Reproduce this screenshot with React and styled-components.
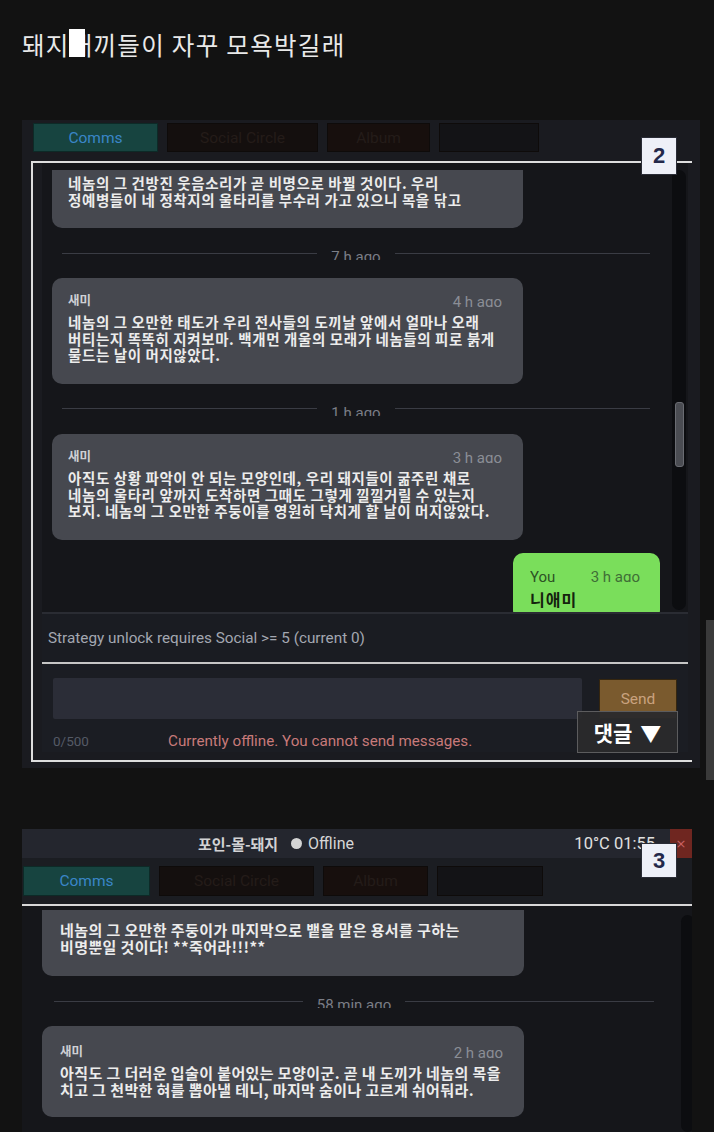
import React from 'react';
import styled, { createGlobalStyle } from 'styled-components';

const GlobalStyle = createGlobalStyle`
  html, body {
    margin: 0;
    background: #121212;
  }
  body {
    font-family: "Noto Sans CJK KR", "Noto Sans", sans-serif;
  }
`;

const Page = styled.div`
  position: relative;
  width: 714px;
  height: 1132px;
  overflow: hidden;
  background: #121212;
`;

const Title = styled.h1`
  box-sizing: border-box;
  height: 120px;
  margin: 0;
  padding: 29px 22px 0;
  font-size: 24.5px;
  font-weight: 400;
  letter-spacing: 1.3px;
  line-height: 32px;
  color: #e9e9e9;
  white-space: nowrap;
`;

const Censor = styled.span`
  position: relative;
  &::after {
    content: '';
    position: absolute;
    left: -1px;
    top: 2px;
    width: 16px;
    height: 28px;
    background: #ffffff;
  }
`;

const Shot = styled.section`
  position: relative;
  margin-left: 22px;
  margin-top: ${(p) => p.$mt || 0}px;
  width: ${(p) => p.$w}px;
  height: ${(p) => p.$h}px;
  background: #1a1b20;
`;

const TabRow = styled.div`
  display: flex;
  gap: 9px;
  height: ${(p) => p.$h}px;
  padding: ${(p) => p.$pad};
  box-sizing: border-box;
  background: ${(p) => p.$bg || 'transparent'};
`;

const Tab = styled.div`
  display: flex;
  align-items: center;
  justify-content: center;
  width: ${(p) => p.$w}px;
  height: ${(p) => p.$h}px;
  box-sizing: border-box;
  font-family: Roboto, "Noto Sans", sans-serif;
  font-size: 15.5px;
  color: ${(p) => (p.$active ? '#3a86c8' : '#241c19')};
  background: ${(p) => (p.$active ? '#174440' : p.$bg || '#140f0e')};
  border: 1px solid ${(p) => (p.$active ? '#0d2a27' : '#0e0b0a')};
`;

const Badge = styled.div`
  position: absolute;
  left: 619px;
  top: ${(p) => p.$top}px;
  z-index: 3;
  width: 36px;
  height: ${(p) => p.$h}px;
  display: flex;
  align-items: center;
  justify-content: center;
  box-sizing: border-box;
  background: #eef0f8;
  border: 1px solid #2a2c36;
  font-family: "Liberation Sans", Arial, sans-serif;
  font-weight: 700;
  font-size: 22px;
  color: #23284a;
`;

const Frame = styled.div`
  margin-left: 9px;
  width: 661px;
  box-sizing: border-box;
  border-top: 2px solid #dedede;
  border-left: 2px solid #dedede;
  border-bottom: 2px solid #dedede;
  padding: 0 4px 8px 9px;
`;

const ChatArea = styled.div`
  display: flex;
  height: ${(p) => p.$h}px;
  overflow: hidden;
  background: #15161a;
`;

const Messages = styled.div`
  display: flex;
  flex-direction: column;
  gap: 18px;
  width: ${(p) => p.$w}px;
  padding: ${(p) => p.$pad};
  flex-shrink: 0;
`;

const Bubble = styled.div`
  width: ${(p) => p.$w}px;
  box-sizing: border-box;
  flex-shrink: 0;
  padding: ${(p) => p.$pad};
  background: #46484f;
  border-radius: ${(p) => (p.$cut ? '0 0 10px 10px' : '10px')};
  color: #ececec;
`;

const Meta = styled.div`
  display: flex;
  justify-content: space-between;
  align-items: flex-start;
  height: 14px;
  overflow: hidden;
  margin-bottom: ${(p) => p.$mb}px;
`;

const Name = styled.span`
  font-size: 12.5px;
  font-weight: 700;
  line-height: 14px;
  color: #cfd0d5;
`;

const Time = styled.span`
  font-family: Roboto, "Noto Sans", sans-serif;
  font-size: 15px;
  line-height: 19px;
  color: ${(p) => p.$color || '#8b8e96'};
`;

const Line = styled.div`
  font-size: ${(p) => p.$fs}px;
  font-weight: 700;
  letter-spacing: ${(p) => p.$ls}px;
  line-height: ${(p) => p.$lh}px;
  white-space: nowrap;
`;

const Sep = styled.div`
  display: flex;
  align-items: center;
  gap: 14px;
  height: 14px;
  margin: 0 ${(p) => p.$mx}px;
  flex-shrink: 0;
  overflow: hidden;
`;

const SepRule = styled.div`
  flex: 1;
  height: 1px;
  background: #3a3c44;
`;

const SepLabel = styled.span`
  align-self: flex-start;
  font-family: Roboto, "Noto Sans", sans-serif;
  font-size: 15px;
  line-height: 22px;
  color: #7b7e87;
`;

const Mine = styled.div`
  align-self: flex-end;
  width: 147px;
  box-sizing: border-box;
  flex-shrink: 0;
  margin-top: -5px;
  padding: 15px 20px 12px 17px;
  background: #7ade5b;
  border-radius: 10px;
`;

const MineText = styled.div`
  font-size: 16px;
  font-weight: 700;
  letter-spacing: 1px;
  line-height: 18px;
  color: #15230e;
`;

const Track = styled.div`
  display: flex;
  flex-direction: column;
  align-items: center;
  width: ${(p) => p.$w}px;
  margin: ${(p) => p.$m};
  padding-top: ${(p) => p.$thumbAt || 0}px;
  box-sizing: border-box;
  background: #0c0d10;
  border-radius: 7px;
  flex-shrink: 0;
`;

const Thumb = styled.div`
  width: 7px;
  height: 63px;
  border-radius: 3px;
  background: #4a4c52;
  border: 1px solid #6a6c72;
`;

const Rule = styled.div`
  height: ${(p) => p.$h}px;
  background: ${(p) => p.$c};
`;

const Notice = styled.div`
  height: 48px;
  padding-left: 6px;
  background: #1a1c22;
  font-family: Roboto, "Noto Sans", sans-serif;
  font-size: 15.3px;
  line-height: 48px;
  color: #a3a7b1;
`;

const Composer = styled.div`
  padding: 14px 11px 2px;
  background: #1b1d23;
`;

const InputRow = styled.div`
  display: flex;
  gap: 17px;
  align-items: flex-start;
`;

const Input = styled.div`
  width: 529px;
  height: 41px;
  background: #2b2d37;
  border-radius: 2px;
`;

const SendBtn = styled.div`
  display: flex;
  align-items: center;
  justify-content: center;
  width: 78px;
  height: 40px;
  margin-top: 1px;
  box-sizing: border-box;
  background: #7a5a2e;
  border: 1px solid #35260f;
  font-family: Roboto, "Noto Sans", sans-serif;
  font-size: 15.5px;
  color: #c9a27e;
`;

const Footer = styled.div`
  display: flex;
  align-items: baseline;
  margin-top: 13px;
  font-family: Roboto, "Noto Sans", sans-serif;
  line-height: 18px;
`;

const Counter = styled.span`
  width: 115px;
  font-size: 13.5px;
  color: #555a66;
`;

const Offline = styled.span`
  font-size: 15.2px;
  color: #c87a7a;
`;

const CommentTag = styled.div`
  position: absolute;
  left: 555px;
  top: 591px;
  z-index: 4;
  width: 101px;
  height: 42px;
  box-sizing: border-box;
  display: flex;
  align-items: center;
  justify-content: center;
  gap: 8px;
  background: rgba(42, 42, 44, 0.95);
  border: 1px solid #5c5c5e;
  font-size: 21px;
  font-weight: 700;
  color: #ffffff;
`;

const TopBar = styled.div`
  display: flex;
  align-items: center;
  height: 29px;
  padding-left: 176px;
  background: #24262e;
`;

const Location = styled.span`
  font-size: 15px;
  font-weight: 700;
  color: #d2d2d4;
`;

const Status = styled.span`
  display: flex;
  align-items: center;
  gap: 6px;
  margin-left: 13px;
  font-family: Roboto, "Noto Sans", sans-serif;
  font-size: 16px;
  color: #d6d6d6;
`;

const Dot = styled.span`
  width: 11px;
  height: 11px;
  border-radius: 50%;
  background: #d4d4d4;
`;

const Clock = styled.span`
  margin-left: auto;
  margin-right: 15px;
  font-family: Roboto, "Noto Sans", sans-serif;
  font-size: 16.5px;
  color: #e0e0e0;
`;

const Close = styled.div`
  display: flex;
  align-items: center;
  justify-content: center;
  width: 22px;
  height: 29px;
  background: #6f2620;
  font-family: "DejaVu Sans", sans-serif;
  font-size: 13px;
  color: #c86060;
`;

const PageScroll = styled.div`
  position: absolute;
  right: 0;
  top: 620px;
  width: 8px;
  height: 160px;
  background: #3a3a3a;
`;

const shotOne = [
  { cut: true, lines: ['네놈의 그 건방진 웃음소리가 곧 비명으로 바뀔 것이다. 우리', '정예병들이 네 정착지의 울타리를 부수러 가고 있으니 목을 닦고'] },
  { sep: '7 h ago' },
  { name: '새미', time: '4 h ago', lines: ['네놈의 그 오만한 태도가 우리 전사들의 도끼날 앞에서 얼마나 오래', '버티는지 똑똑히 지켜보마. 백개먼 개울의 모래가 네놈들의 피로 붉게', '물드는 날이 머지않았다.'] },
  { sep: '1 h ago' },
  { name: '새미', time: '3 h ago', lines: ['아직도 상황 파악이 안 되는 모양인데, 우리 돼지들이 굶주린 채로', '네놈의 울타리 앞까지 도착하면 그때도 그렇게 낄낄거릴 수 있는지', '보지. 네놈의 그 오만한 주둥이를 영원히 닥치게 할 날이 머지않았다.'] },
];

const shotTwo = [
  { cut: true, lines: ['네놈의 그 오만한 주둥이가 마지막으로 뱉을 말은 용서를 구하는', '비명뿐일 것이다! **죽어라!!!**'] },
  { sep: '58 min ago' },
  { name: '새미', time: '2 h ago', lines: ['아직도 그 더러운 입술이 붙어있는 모양이군. 곧 내 도끼가 네놈의 목을', '치고 그 천박한 혀를 뽑아낼 테니, 마지막 숨이나 고르게 쉬어둬라.'] },
];

function Feed({ items, v }) {
  return items.map((m, i) => {
    if (m.sep) {
      return (
        <Sep key={i} $mx={v.sepMx}>
          <SepRule />
          <SepLabel>{m.sep}</SepLabel>
          <SepRule />
        </Sep>
      );
    }
    return (
      <Bubble key={i} $w={v.w} $cut={m.cut} $pad={m.cut ? v.cutPad : v.pad}>
        {m.name && (
          <Meta $mb={v.metaMb}>
            <Name>{m.name}</Name>
            <Time>{m.time}</Time>
          </Meta>
        )}
        {m.lines.map((l, j) => (
          <Line key={j} $fs={v.fs} $ls={v.ls} $lh={v.lh}>{l}</Line>
        ))}
      </Bubble>
    );
  });
}

const v1 = { w: 471, pad: '15px 21px 20px 16px', cutPad: '5px 21px 20px 16px', metaMb: 7, fs: 14.5, ls: 0.6, lh: 16.6, sepMx: 10 };
const v2 = { w: 482, pad: '18px 21px 19px 18px', cutPad: '11px 21px 21px 18px', metaMb: 6, fs: 15, ls: 0.4, lh: 17, sepMx: 12 };

export default function App() {
  return (
    <Page>
      <GlobalStyle />
      <Title>
        돼지<Censor>새</Censor>끼들이 자꾸 모욕박길래
      </Title>

      <Shot $w={678} $h={648}>
        <TabRow $h={41} $pad="3px 0 9px 11px">
          <Tab $active $w={125} $h={29}>Comms</Tab>
          <Tab $w={151} $h={29}>Social Circle</Tab>
          <Tab $w={103} $h={29} $bg="#170f0d">Album</Tab>
          <Tab $w={100} $h={29} $bg="#131316" />
        </TabRow>
        <Badge $top={17} $h={38}>2</Badge>
        <Frame>
          <ChatArea $h={449}>
            <Messages $w={608} $pad="7px 0 0 10px">
              <Feed items={shotOne} v={v1} />
              <Mine>
                <Meta $mb={8}>
                  <Time $color="#2d5224">You</Time>
                  <Time $color="#3f6e36">3 h ago</Time>
                </Meta>
                <MineText>니애미</MineText>
              </Mine>
            </Messages>
            <Track $w={14} $m="7px 0 2px 12px" $thumbAt={232}>
              <Thumb />
            </Track>
          </ChatArea>
          <Rule $h={2} $c="#2a2c33" />
          <Notice>Strategy unlock requires Social &gt;= 5 (current 0)</Notice>
          <Rule $h={2} $c="#c6c6c6" />
          <Composer>
            <InputRow>
              <Input />
              <SendBtn>Send</SendBtn>
            </InputRow>
            <Footer>
              <Counter>0/500</Counter>
              <Offline>Currently offline. You cannot send messages.</Offline>
            </Footer>
          </Composer>
        </Frame>
        <CommentTag>
          <span>댓글</span>
          <span>▼</span>
        </CommentTag>
      </Shot>

      <Shot $w={670} $h={303} $mt={61}>
        <TopBar>
          <Location>포인-몰-돼지</Location>
          <Status>
            <Dot />
            Offline
          </Status>
          <Clock>10°C 01:55</Clock>
          <Close>×</Close>
        </TopBar>
        <Badge $top={14} $h={35}>3</Badge>
        <TabRow $h={46} $pad="8px 0 0 1px" $bg="#1b1d22">
          <Tab $active $w={127} $h={30}>Comms</Tab>
          <Tab $w={155} $h={30}>Social Circle</Tab>
          <Tab $w={105} $h={30} $bg="#170f0d">Album</Tab>
          <Tab $w={106} $h={30} $bg="#131316" />
        </TabRow>
        <Rule $h={2} $c="#d8d8d8" />
        <ChatArea $h={226}>
          <Messages $w={624} $pad="4px 0 0 20px">
            <Feed items={shotTwo} v={v2} />
          </Messages>
          <Track $w={13} $m="9px 0 0 15px" />
        </ChatArea>
      </Shot>

      <PageScroll />
    </Page>
  );
}
